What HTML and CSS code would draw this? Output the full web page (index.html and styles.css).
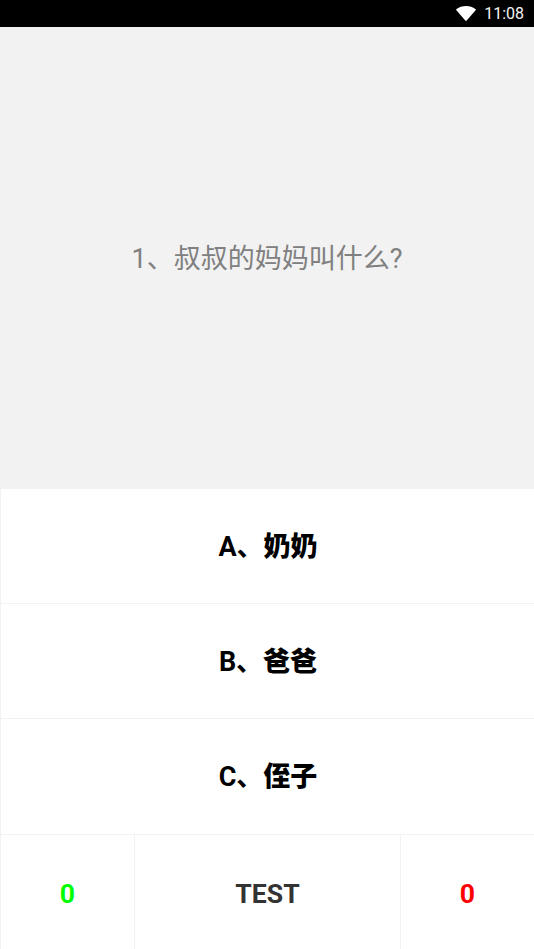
FILE: index.html
```html
<!DOCTYPE html>
<html lang="zh">
<head>
<meta charset="utf-8">
<title>Quiz</title>
<link rel="stylesheet" href="styles.css">
</head>
<body>
<div class="status">
  <svg class="wifi" viewBox="0 0 20 15" width="20" height="15" aria-hidden="true"><path d="M0.600 2.900C3.200 1 6.400 0 10 0s6.800 1 9.400 2.900c.5.400.6.900.2 1.400L10.700 14.600c-.4.500-1 .5-1.400 0L.4 4.300C0 3.800.1 3.300.6 2.900z" fill="#fff"/></svg>
  <span class="time">11:08</span>
</div>
<div class="question">1、叔叔的妈妈叫什么?</div>
<div class="answers">
  <div class="answer">A、<span class="cjk">奶奶</span></div>
  <div class="answer">B、<span class="cjk">爸爸</span></div>
  <div class="answer answer-tall">C、<span class="cjk">侄子</span></div>
  <div class="bottom">
    <div class="cell score-good">0</div>
    <div class="cell test">TEST</div>
    <div class="cell score-bad">0</div>
  </div>
</div>
</body>
</html>
```
FILE: styles.css
```css
* { box-sizing: border-box; }
html, body { margin: 0; height: 100%; }
body {
  width: 534px;
  height: 949px;
  overflow: hidden;
  display: flex;
  flex-direction: column;
  background: #f2f2f2;
  font-family: Roboto, "Noto Sans CJK SC", sans-serif;
}
.status {
  height: 27px;
  flex: none;
  background: #000;
  display: flex;
  align-items: center;
  justify-content: flex-end;
  gap: 8px;
  padding-right: 10px;
  color: #fff;
}
.wifi { display: block; }
.time { font-size: 16px; line-height: 27px; color: #f4f4f4; }
.question {
  height: 462px;
  flex: none;
  display: flex;
  align-items: center;
  justify-content: center;
  padding-bottom: 4px;
  font-size: 27px;
  color: #808080;
}
.answers {
  flex: 1;
  display: flex;
  flex-direction: column;
  padding-left: 1px;
  gap: 1px;
}
.answer {
  height: 114px;
  flex: none;
  background: #fff;
  display: flex;
  align-items: center;
  justify-content: center;
  padding: 0 0 4px 1px;
  font-size: 27px;
  font-weight: 700;
  color: #000;
}
.answer-tall { height: 115px; }
.cjk { font-weight: 900; }
.bottom {
  flex: 1;
  display: grid;
  grid-template-columns: 133px 265px 1fr;
  column-gap: 1px;
}
.cell {
  background: #fff;
  display: flex;
  align-items: center;
  justify-content: center;
  padding-top: 2px;
  font-size: 26.6px;
  font-weight: 700;
}
.score-good { color: #00ff00; }
.score-bad { color: #ff0000; }
.test { color: #333; }
```
